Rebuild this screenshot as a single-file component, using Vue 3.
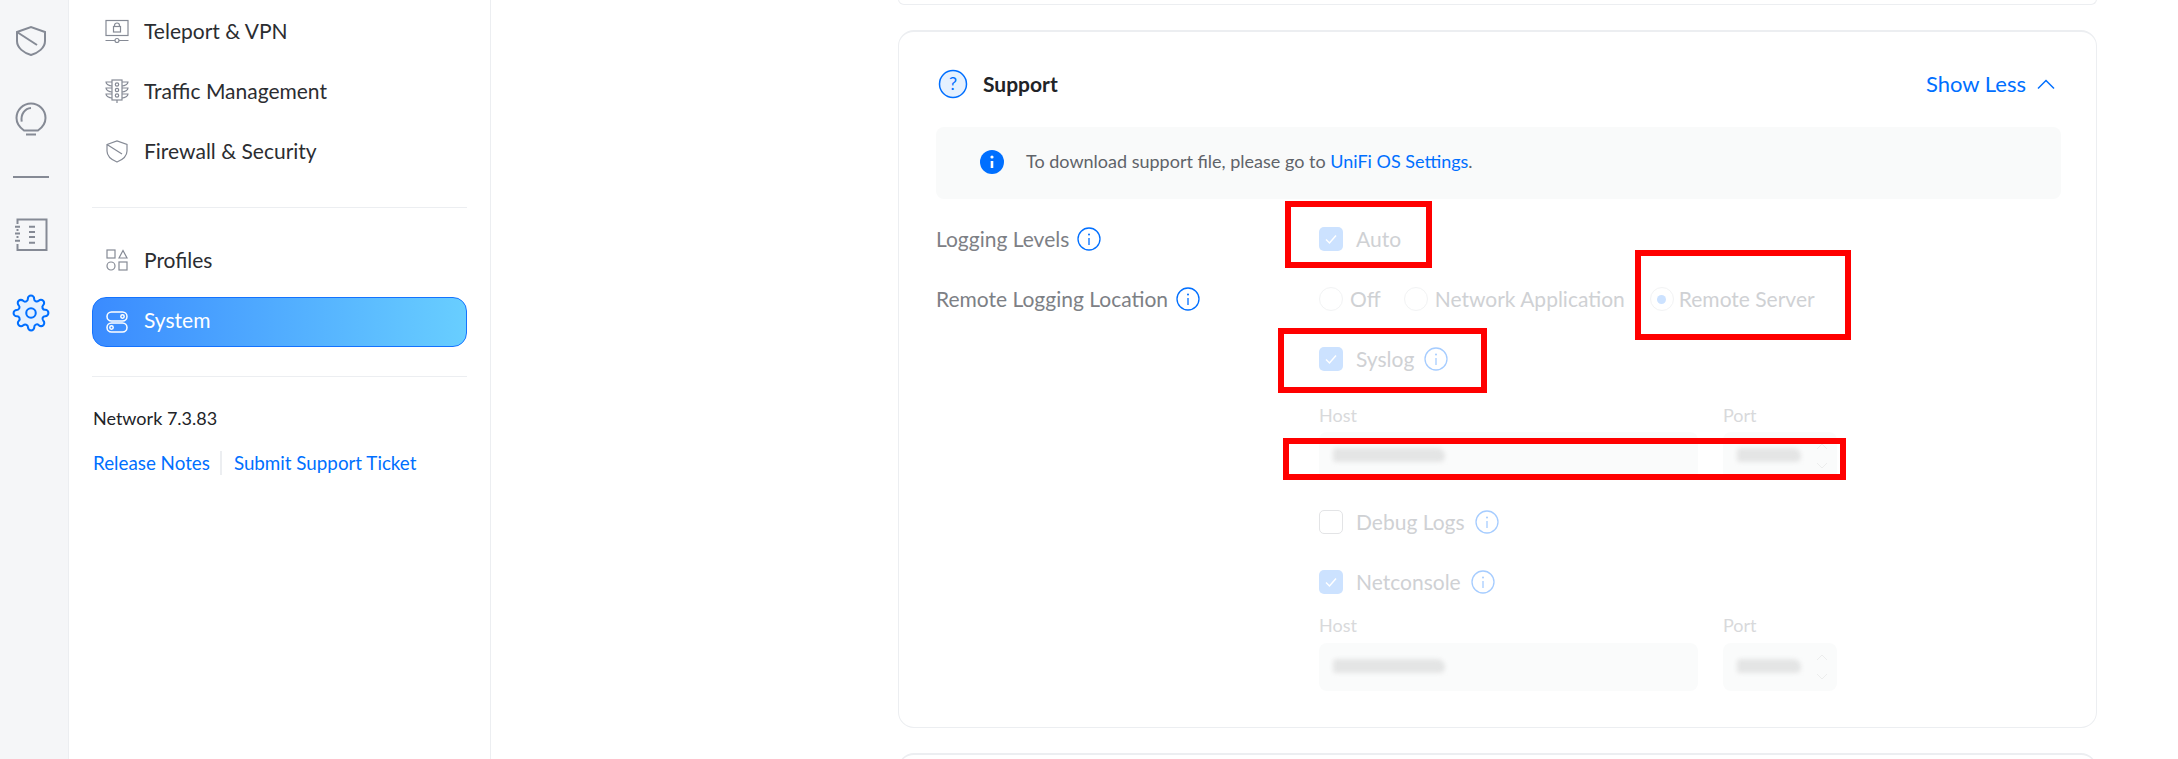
<template>
  <div class="page">
    <!-- Icon rail -->
    <aside class="rail">
      <svg class="rail-icon" width="36" height="36" viewBox="0 0 36 36">
        <path d="M4 9 18 4l14 5v9c0 7-7 12-14 14C11 30 4 25 4 18Z" />
        <path d="M4 9 24 22" />
      </svg>
      <svg class="rail-icon bulb" width="36" height="36" viewBox="0 0 36 36">
        <path d="M11 30.5C6 27 3.5 22.5 3.5 18a14.5 14.5 0 0 1 29 0c0 4.500-2.500 9-7.500 12.500Z" />
        <path d="M8.700 21.700C7.500 14 12 8.500 18 8" />
        <path d="M13 34.500h10" />
      </svg>
      <div class="rail-line"></div>
      <svg class="rail-icon book" width="36" height="36" viewBox="0 0 36 36">
        <path d="M4.500 7V2.500h29v30.500h-29V27M4.500 12v2M4.500 19v2" />
        <path d="M2 9.700h5M2 16.500h5M2 23.700h5M16 9.700h6M16 15h6M16 20h6M16 25.700h6" />
      </svg>
      <svg class="rail-icon gear" width="38" height="38" viewBox="0 0 24 24">
        <path d="M19.400 15a1.650 1.650 0 0 0 .33 1.820l.06.06a2 2 0 0 1 0 2.830 2 2 0 0 1-2.830 0l-.06-.06a1.650 1.650 0 0 0-1.820-.33 1.650 1.650 0 0 0-1 1.510V21a2 2 0 0 1-2 2 2 2 0 0 1-2-2v-.09A1.650 1.650 0 0 0 9 19.400a1.650 1.650 0 0 0-1.820.33l-.06.06a2 2 0 0 1-2.830 0 2 2 0 0 1 0-2.830l.06-.06a1.650 1.650 0 0 0 .33-1.820 1.650 1.650 0 0 0-1.510-1H3a2 2 0 0 1-2-2 2 2 0 0 1 2-2h.09A1.650 1.650 0 0 0 4.600 9a1.650 1.650 0 0 0-.33-1.820l-.06-.06a2 2 0 0 1 0-2.830 2 2 0 0 1 2.830 0l.06.06a1.650 1.650 0 0 0 1.820.33H9a1.650 1.650 0 0 0 1-1.510V3a2 2 0 0 1 2-2 2 2 0 0 1 2 2v.09a1.650 1.650 0 0 0 1 1.510 1.650 1.650 0 0 0 1.820-.33l.06-.06a2 2 0 0 1 2.830 0 2 2 0 0 1 0 2.830l-.06.06a1.650 1.650 0 0 0-.33 1.820V9a1.650 1.650 0 0 0 1.510 1H21a2 2 0 0 1 2 2 2 2 0 0 1-2 2h-.09a1.650 1.650 0 0 0-1.510 1z" />
        <circle cx="12" cy="12" r="3" />
      </svg>
    </aside>

    <!-- Settings navigation -->
    <nav class="sidebar">
      <div class="nav-group">
        <a class="nav-item">
          <svg class="nav-icon" width="24" height="24" viewBox="0 0 24 24">
            <rect x="1" y="1.500" width="22" height="15" />
            <rect x="8.500" y="7.500" width="7" height="5.500" />
            <path d="M9.500 7.500V6.500a2.500 2.500 0 0 1 5 0v1M.5 21.500h9.500M14 21.500h9.500" />
            <circle cx="12" cy="21.500" r="2" />
          </svg>
          <span>Teleport &amp; VPN</span>
        </a>
        <a class="nav-item">
          <svg class="nav-icon" width="24" height="24" viewBox="0 0 24 24">
            <rect x="7" y="1" width="10" height="20" />
            <circle cx="12" cy="5.500" r="1.700" />
            <circle cx="12" cy="11" r="1.700" />
            <circle cx="12" cy="16.500" r="1.700" />
            <path d="M7 3H1c0 2 3 4 6 4M7 9H1c0 2 3 4 6 4M7 15H1c0 2 3 4 6 4M17 3h6c0 2-3 4-6 4M17 9h6c0 2-3 4-6 4M17 15h6c0 2-3 4-6 4M12 21v3" />
          </svg>
          <span>Traffic Management</span>
        </a>
        <a class="nav-item">
          <svg class="nav-icon" width="24" height="24" viewBox="0 0 24 24">
            <path d="M2 5.500 12 2l10 3.500V12c0 5-5 9-10 11C7 21 2 17 2 12ZM2 5.500 17 15" />
          </svg>
          <span>Firewall &amp; Security</span>
        </a>
      </div>
      <div class="nav-divider first"></div>
      <div class="nav-group tight">
        <a class="nav-item">
          <svg class="nav-icon" width="24" height="24" viewBox="0 0 24 24">
            <rect x="2" y="2" width="8" height="8" />
            <path d="M14 10 18 2.500 22 10Z" />
            <circle cx="6" cy="18" r="4" />
            <rect x="14" y="14" width="8" height="8" />
          </svg>
          <span>Profiles</span>
        </a>
        <a class="nav-item active">
          <svg class="nav-icon" width="24" height="24" viewBox="0 0 24 24">
            <rect x="2" y="2" width="20" height="9" rx="4.500" />
            <circle cx="17.500" cy="6.500" r="1.700" />
            <rect x="2" y="13" width="20" height="9" rx="4.500" />
            <circle cx="6.500" cy="17.500" r="1.700" />
          </svg>
          <span>System</span>
        </a>
      </div>
      <div class="nav-divider second"></div>
      <div class="version">Network 7.3.83</div>
      <div class="links">
        <a>Release Notes</a>
        <i class="links-sep"></i>
        <a>Submit Support Ticket</a>
      </div>
    </nav>

    <!-- Main content -->
    <main class="main">
      <div class="card-stub"></div>

      <section class="card">
        <header class="card-head">
          <svg class="support-icon" width="30" height="30" viewBox="0 0 30 30">
            <circle cx="15" cy="15" r="13.500" />
            <text x="15" y="21" text-anchor="middle">?</text>
          </svg>
          <h2>Support</h2>
          <a class="show-less">
            Show Less
            <svg width="20" height="12" viewBox="0 0 20 12"><path d="M2 10.500 10 2.500l8 8" /></svg>
          </a>
        </header>

        <div class="notice">
          <svg width="24" height="24" viewBox="0 0 24 24">
            <circle cx="12" cy="12" r="12" fill="#006fff" />
            <circle cx="12" cy="7" r="1.600" fill="#fff" />
            <path d="M12 11v7" stroke="#fff" stroke-width="2.600" />
          </svg>
          <p>To download support file, please go to <a>UniFi OS Settings</a>.</p>
        </div>

        <div class="form-row levels">
          <div class="form-label">
            Logging Levels
            <svg class="info" width="24" height="24" viewBox="0 0 24 24"><circle cx="12" cy="12" r="11" /><circle class="dot" cx="12" cy="7.500" r="1" /><path d="M12 11v7" /></svg>
          </div>
          <label class="check on">
            <span class="box"><svg width="14" height="14" viewBox="0 0 14 14"><path d="m2 7.500 3.500 3.500L12 3.500" /></svg></span>
            Auto
          </label>
        </div>

        <div class="form-row location">
          <div class="form-label">
            Remote Logging Location
            <svg class="info" width="24" height="24" viewBox="0 0 24 24"><circle cx="12" cy="12" r="11" /><circle class="dot" cx="12" cy="7.500" r="1" /><path d="M12 11v7" /></svg>
          </div>
          <div class="radios">
            <label class="radio off-radio"><span class="dot-box"></span>Off</label>
            <label class="radio app-radio"><span class="dot-box"></span>Network Application</label>
            <label class="radio selected"><span class="dot-box"></span>Remote Server</label>
          </div>
        </div>

        <div class="options">
          <label class="check on syslog">
            <span class="box"><svg width="14" height="14" viewBox="0 0 14 14"><path d="m2 7.500 3.500 3.500L12 3.500" /></svg></span>
            Syslog
            <svg class="info faded" width="24" height="24" viewBox="0 0 24 24"><circle cx="12" cy="12" r="11" /><circle class="dot" cx="12" cy="7.500" r="1" /><path d="M12 11v7" /></svg>
          </label>
          <div class="host-port">
            <div class="field host">
              <span class="field-label">Host</span>
              <div class="input"><div class="smudge"></div></div>
            </div>
            <div class="field port">
              <span class="field-label">Port</span>
              <div class="input">
                <div class="smudge short"></div>
                <svg class="spinner" width="12" height="28" viewBox="0 0 12 28"><path d="m1 7 5-5 5 5M1 21l5 5 5-5" /></svg>
              </div>
            </div>
          </div>

          <label class="check debug">
            <span class="box"></span>
            Debug Logs
            <svg class="info faded" width="24" height="24" viewBox="0 0 24 24"><circle cx="12" cy="12" r="11" /><circle class="dot" cx="12" cy="7.500" r="1" /><path d="M12 11v7" /></svg>
          </label>
          <label class="check on netconsole">
            <span class="box"><svg width="14" height="14" viewBox="0 0 14 14"><path d="m2 7.500 3.500 3.500L12 3.500" /></svg></span>
            Netconsole
            <svg class="info faded" width="24" height="24" viewBox="0 0 24 24"><circle cx="12" cy="12" r="11" /><circle class="dot" cx="12" cy="7.500" r="1" /><path d="M12 11v7" /></svg>
          </label>
          <div class="host-port second-pair">
            <div class="field host">
              <span class="field-label">Host</span>
              <div class="input"><div class="smudge"></div></div>
            </div>
            <div class="field port">
              <span class="field-label">Port</span>
              <div class="input">
                <div class="smudge short"></div>
                <svg class="spinner" width="12" height="28" viewBox="0 0 12 28"><path d="m1 7 5-5 5 5M1 21l5 5 5-5" /></svg>
              </div>
            </div>
          </div>
        </div>
      </section>

      <div class="card-next"></div>
    </main>

    <!-- Red annotation boxes drawn over the screenshot -->
    <div class="mark mark-auto"></div>
    <div class="mark mark-remote"></div>
    <div class="mark mark-syslog"></div>
    <div class="mark mark-host"></div>
  </div>
</template>

<script setup>
</script>

<style>
html, body {
  margin: 0;
  background: #fff;
}
</style>

<style scoped>
.page {
  position: relative;
  display: flex;
  width: 2178px;
  height: 759px;
  overflow: hidden;
  background: #fff;
  font-family: Lato, "Open Sans", sans-serif;
  color: #212327;
}

/* Rail */
.rail {
  box-sizing: border-box;
  width: 69px;
  flex: none;
  padding-top: 23px;
  padding-right: 6px;
  display: flex;
  flex-direction: column;
  align-items: center;
  background: #f5f6f8;
  border-right: 1px solid #eceef1;
}

.rail-icon {
  fill: none;
  stroke: #858a95;
  stroke-width: 2;
}

.bulb {
  margin-top: 41px;
}

.rail-line {
  width: 36px;
  height: 2px;
  margin-top: 40px;
  background: #858a95;
}

.book {
  margin-top: 39px;
}

.gear {
  margin-top: 41px;
  stroke: #006fff;
  stroke-width: 1.300;
  fill: #e5f1ff;
}

/* Sidebar */
.sidebar {
  box-sizing: border-box;
  width: 422px;
  flex: none;
  padding: 6px 23px 0 23px;
  border-right: 1px solid #eceef1;
}

.nav-group {
  display: flex;
  flex-direction: column;
  gap: 10px;
}

.nav-group.tight {
  gap: 12px;
}

.nav-item {
  box-sizing: border-box;
  display: flex;
  align-items: center;
  height: 50px;
  padding-left: 13px;
  padding-bottom: 2px;
  gap: 15px;
  border-radius: 14px;
  font-size: 21px;
  color: #2b2d31;
}

.nav-icon {
  margin-top: 2px;
  fill: none;
  stroke: #858a95;
  stroke-width: 1.200;
}

.nav-item.active {
  color: #fff;
  border: 1px solid #1473ff;
  padding-left: 12px;
  padding-bottom: 5px;
  background: linear-gradient(90deg, #3a8bff, #68ceff);
}

.active .nav-icon {
  margin-top: 5px;
  stroke: #fff;
  stroke-width: 1.500;
}

.nav-divider {
  height: 1px;
  background: #eceef1;
}

.nav-divider.first {
  margin: 31px 0 27px;
}

.nav-divider.second {
  margin-top: 29px;
}

.version {
  margin-top: 29px;
  padding-left: 1px;
  font-size: 18px;
  line-height: 24px;
}

.links {
  display: flex;
  align-items: center;
  margin-top: 21px;
  padding-left: 1px;
  font-size: 18.800px;
  line-height: 24px;
  color: #006fff;
}

.links-sep {
  width: 2px;
  height: 24px;
  margin: 0 12px 0 10px;
  background: #eceef1;
}

/* Main */
.main {
  flex: none;
  width: 1199px;
  margin-left: 407px;
}

.card-stub {
  box-sizing: border-box;
  height: 6px;
  margin-top: -1px;
  border: 1px solid #eceef1;
  border-top: 0;
  border-radius: 0 0 12px 12px;
}

.card {
  box-sizing: border-box;
  height: 698px;
  margin-top: 25px;
  padding: 36px 35px 0 37px;
  border: 1px solid #eceef1;
  border-top-width: 2px;
  border-radius: 16px;
}

.card-next {
  height: 100px;
  margin-top: 25px;
  border: 1px solid #eceef1;
  border-top-width: 2px;
  border-radius: 16px;
}

.card-head {
  display: flex;
  align-items: center;
  height: 32px;
  padding-left: 2px;
}

.card-head h2 {
  margin: 0 0 2px 15px;
  font-size: 21px;
  font-weight: 700;
  color: #212327;
}

.support-icon circle {
  fill: #e5f1ff;
  stroke: #006fff;
  stroke-width: 1.500;
}

.support-icon text {
  font-family: Lato, sans-serif;
  font-size: 18px;
  fill: #006fff;
}

.show-less {
  display: flex;
  align-items: center;
  gap: 10px;
  margin-left: auto;
  margin-right: 5px;
  margin-bottom: 2px;
  font-size: 22px;
  color: #006fff;
}

.show-less svg {
  margin-top: 2px;
  fill: none;
  stroke: #006fff;
  stroke-width: 1.500;
}

.notice {
  display: flex;
  align-items: center;
  box-sizing: border-box;
  width: 1125px;
  height: 72px;
  margin-top: 27px;
  padding-left: 44px;
  padding-bottom: 5px;
  gap: 22px;
  border-radius: 8px;
  background: #f9fafa;
}

.notice svg {
  margin-top: 3px;
}

.notice p {
  margin: 0;
  font-size: 18px;
  color: #5f6369;
}

.notice a {
  color: #006fff;
}

/* Form */
.form-row {
  display: flex;
  align-items: center;
  height: 32px;
}

.form-row.levels {
  margin-top: 24px;
}

.form-row.location {
  margin-top: 28px;
}

.form-label {
  display: flex;
  align-items: center;
  gap: 8px;
  width: 383px;
  flex: none;
  padding-bottom: 2px;
  font-size: 21px;
  color: #7d8085;
}

.info {
  margin-top: 2px;
  fill: none;
  stroke: #006fff;
  stroke-width: 1.300;
}

.info .dot {
  fill: #006fff;
  stroke: none;
}

.info.faded {
  opacity: 0.35;
  margin-left: -3px;
}

.check,
.radio {
  box-sizing: border-box;
  display: flex;
  align-items: center;
  gap: 13px;
  height: 32px;
  padding-bottom: 2px;
  font-size: 21px;
  color: #cfd1d4;
}

.box {
  box-sizing: border-box;
  display: flex;
  align-items: center;
  justify-content: center;
  width: 24px;
  height: 24px;
  margin-top: 2px;
  border: 1px solid #e3e4e6;
  border-radius: 5px;
}

.check.on .box {
  border: 0;
  background: #cce2ff;
}

.box svg {
  fill: none;
  stroke: #fff;
  stroke-width: 1.500;
}

.radios {
  display: flex;
  align-items: center;
}

.radio {
  gap: 7px;
}

.off-radio {
  margin-right: 23px;
}

.app-radio {
  margin-right: 25px;
}

.selected {
  gap: 5px;
}

.dot-box {
  box-sizing: border-box;
  display: flex;
  align-items: center;
  justify-content: center;
  width: 24px;
  height: 24px;
  margin-top: 2px;
  border: 1px solid #f2f3f4;
  border-radius: 50%;
}

.selected .dot-box::after {
  content: "";
  width: 9px;
  height: 9px;
  border-radius: 50%;
  background: #cce2ff;
}

.options {
  margin-left: 383px;
}

.syslog {
  margin-top: 28px;
}

.host-port {
  display: flex;
  gap: 25px;
  margin-top: 28px;
}

.second-pair {
  margin-top: 15px;
}

.field-label {
  display: block;
  font-size: 18px;
  line-height: 24px;
  color: #d8d9db;
}

.host {
  width: 379px;
}

.port {
  width: 114px;
}

.input {
  position: relative;
  height: 48px;
  margin-top: 5px;
  border-radius: 8px;
  background: #fafbfb;
}

.second-pair .input {
  margin-top: 6px;
}

.smudge {
  position: absolute;
  left: 14px;
  top: 16px;
  width: 112px;
  height: 14px;
  border-radius: 4px 8px 5px 3px;
  background: #e4e5e5;
  filter: blur(2px);
}

.smudge.short {
  width: 64px;
}

.spinner {
  position: absolute;
  right: 9px;
  top: 10px;
  fill: none;
  stroke: #eceded;
}

.debug {
  margin-top: 26px;
}

.netconsole {
  margin-top: 28px;
}

/* Annotations */
.mark {
  position: absolute;
  box-sizing: border-box;
  border: 6px solid #ff0000;
}

.mark-auto {
  left: 1285px;
  top: 201px;
  width: 147px;
  height: 67px;
}

.mark-remote {
  left: 1635px;
  top: 250px;
  width: 216px;
  height: 90px;
}

.mark-syslog {
  left: 1278px;
  top: 328px;
  width: 209px;
  height: 65px;
}

.mark-host {
  left: 1283px;
  top: 438px;
  width: 563px;
  height: 42px;
}
</style>
